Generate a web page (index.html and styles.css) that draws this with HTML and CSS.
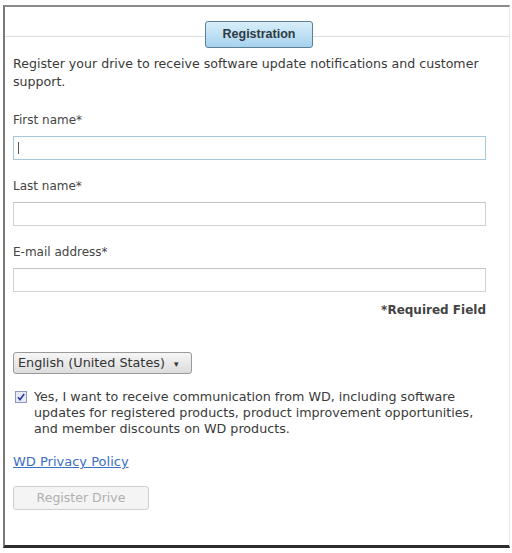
FILE: index.html
```html
<!DOCTYPE html>
<html>
<head>
<meta charset="utf-8">
<link rel="stylesheet" href="styles.css">
</head>
<body>
<div class="frame">
  <div class="tabbar">
    <div class="tab">Registration</div>
  </div>
  <div class="content">
    <p class="intro">Register your drive to receive software update notifications and customer support.</p>
    <label class="lbl first">First name*</label>
    <div class="input focus"><span class="caret"></span></div>
    <label class="lbl">Last name*</label>
    <div class="input"></div>
    <label class="lbl">E-mail address*</label>
    <div class="input"></div>
    <div class="required">*Required Field</div>
    <div class="select">English (United States) <span class="arrow">&#9662;</span></div>
    <div class="check-row">
      <span class="checkbox"><svg width="10" height="10" viewBox="0 0 10 10"><path d="M2 5.2 L4 7.6 L8.2 2" fill="none" stroke="#2a3f9a" stroke-width="1.6"/></svg></span>
      <span class="check-text">Yes, I want to receive communication from WD, including software updates for registered products, product improvement opportunities, and member discounts on WD products.</span>
    </div>
    <a class="privacy" href="#">WD Privacy Policy</a>
    <div class="btn">Register Drive</div>
  </div>
</div>
</body>
</html>
```
FILE: styles.css
```css
html, body {
  margin: 0;
  padding: 0;
  background: #ffffff;
}
body {
  font-family: "DejaVu Sans", Verdana, sans-serif;
  color: #3a3a3a;
  width: 512px;
  height: 553px;
  overflow: hidden;
}
.frame {
  margin: 5px 0 0 3px;
  width: 507px;
  height: 543px;
  border-top: 2px solid #8a8a8a;
  border-left: 2px solid #7a7a7a;
  border-right: 1px solid #e6e6e6;
  border-bottom: 3px solid #2c2c2c;
  box-sizing: border-box;
  background: #fff;
}
.tabbar {
  position: relative;
  height: 42px;
  display: flex;
  justify-content: center;
  align-items: flex-start;
  padding-top: 14px;
  box-sizing: border-box;
}
.tabbar::before {
  content: "";
  position: absolute;
  left: 0;
  right: 0;
  top: 29px;
  border-top: 1px solid #dcdcdc;
}
.tab {
  position: relative;
  width: 108px;
  height: 27px;
  box-sizing: border-box;
  border: 1px solid #5d7f94;
  border-radius: 3px;
  background: linear-gradient(#d9eef9, #a6d2ee);
  color: #2f3a44;
  font-family: "Liberation Sans", Arial, sans-serif;
  font-size: 12.5px;
  font-weight: bold;
  text-align: center;
  line-height: 25px;
  margin-left: 4px;
}
.content {
  padding: 0 20px 0 8px;
}
.intro {
  margin: 6px 0 0 0;
  font-size: 12.6px;
  line-height: 18px;
  color: #3a3a3a;
}
.lbl {
  display: block;
  font-size: 12px;
  margin-top: 19px;
  line-height: 14px;
  color: #444;
}
.lbl.first {
  margin-top: 22px;
}
.input {
  margin-top: 9px;
  height: 24px;
  width: 473px;
  box-sizing: border-box;
  border: 1px solid #d2d2d2;
  border-top-color: #c4c4c4;
  background: #fff;
  position: relative;
}
.input.focus {
  border-color: #a9c7dc;
}
.caret {
  position: absolute;
  left: 4px;
  top: 5px;
  width: 1px;
  height: 12px;
  background: #555;
}
.required {
  text-align: right;
  width: 473px;
  margin-top: 11px;
  font-size: 12px;
  font-weight: bold;
  color: #444;
}
.select {
  margin-top: 35px;
  width: 179px;
  height: 22px;
  box-sizing: border-box;
  border: 1px solid #9a9a9a;
  border-radius: 3px;
  background: linear-gradient(#f6f6f6, #dcdcdc);
  font-size: 12.8px;
  line-height: 20px;
  padding-left: 4px;
  color: #333;
  white-space: nowrap;
}
.arrow {
  font-size: 9px;
  margin-left: 5px;
}
.check-row {
  display: flex;
  margin-top: 15px;
  align-items: flex-start;
}
.checkbox {
  flex: none;
  width: 12px;
  height: 12px;
  box-sizing: border-box;
  border: 1px solid #8f98c0;
  background: #e6e9f6;
  margin: 2px 7px 0 2px;
  display: flex;
  align-items: center;
  justify-content: center;
}
.check-text {
  font-size: 12.7px;
  line-height: 16px;
  color: #3a3a3a;
  width: 440px;
}
.privacy {
  display: block;
  margin-top: 17px;
  font-size: 13px;
  color: #3a6fc4;
  text-decoration: underline;
}
.btn {
  margin-top: 17px;
  width: 136px;
  height: 24px;
  box-sizing: border-box;
  border: 1px solid #cfcfcf;
  border-radius: 3px;
  background: #f4f4f4;
  color: #b0b0b0;
  font-size: 12.5px;
  text-align: center;
  line-height: 22px;
}
```
